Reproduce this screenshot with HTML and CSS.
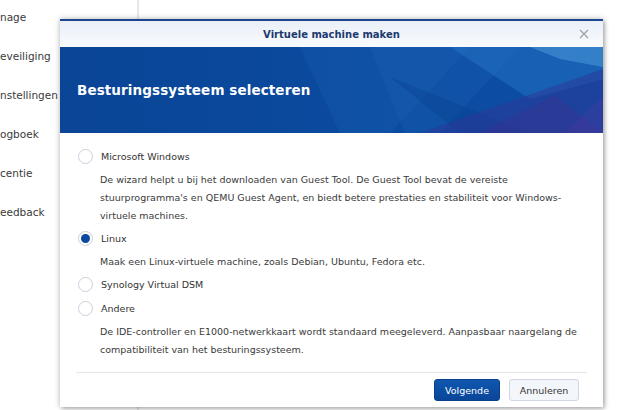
FILE: index.html
```html
<!DOCTYPE html>
<html lang="nl">
<head>
<meta charset="utf-8">
<title>Virtuele machine maken</title>
<link rel="stylesheet" href="styles.css">
</head>
<body>
<div class="page">
  <nav class="sidebar">
    <div class="nav-item">nage</div>
    <div class="nav-item">eveiliging</div>
    <div class="nav-item">nstellingen</div>
    <div class="nav-item">ogboek</div>
    <div class="nav-item">centie</div>
    <div class="nav-item">eedback</div>
  </nav>
  <div class="content"></div>

  <div class="dialog">
    <div class="dlg-header">
      <span class="dlg-title">Virtuele machine maken</span>
      <svg class="dlg-close" width="10" height="10" viewBox="0 0 10 10"><path d="M1 1L9 9M9 1L1 9" stroke="#9aa1aa" stroke-width="1.2" fill="none"/></svg>
    </div>
    <div class="banner">
      <svg class="banner-art" width="543" height="86" viewBox="0 0 543 86" preserveAspectRatio="none">
        <defs>
          <linearGradient id="bg" x1="0" y1="0" x2="1" y2="0">
            <stop offset="0" stop-color="#0a4596"/>
            <stop offset="0.55" stop-color="#0b4a9f"/>
            <stop offset="1" stop-color="#0d4fa6"/>
          </linearGradient>
        </defs>
        <rect width="543" height="86" fill="url(#bg)"/>
        <polygon points="240,0 410,0 330,86 280,86" fill="#1d63b6" opacity="0.28"/>
        <polygon points="310,0 460,0 380,86 345,86" fill="#2470c0" opacity="0.2"/>
        <polygon points="390,0 543,0 543,32 470,52" fill="#2a7cca" opacity="0.4"/>
        <polygon points="470,0 543,0 543,20 500,12" fill="#5fb0e6" opacity="0.4"/>
        <polygon points="330,30 470,86 400,86" fill="#083a88" opacity="0.3"/>
        <polygon points="360,86 543,22 543,86" fill="#2e3596" opacity="0.5"/>
        <polygon points="420,86 495,48 543,86" fill="#3b2f8e" opacity="0.4"/>
        <polygon points="505,86 543,50 543,86" fill="#4a3aa0" opacity="0.35"/>
      </svg>
      <h1 class="banner-title">Besturingssysteem selecteren</h1>
    </div>
    <div class="dlg-body">
      <div class="option">
        <span class="radio"></span>
        <span class="opt-label">Microsoft Windows</span>
      </div>
      <p class="opt-desc">De wizard helpt u bij het downloaden van Guest Tool. De Guest Tool bevat de vereiste stuurprogramma's en QEMU Guest Agent, en biedt betere prestaties en stabiliteit voor Windows-virtuele machines.</p>
      <div class="option">
        <span class="radio checked"></span>
        <span class="opt-label">Linux</span>
      </div>
      <p class="opt-desc">Maak een Linux-virtuele machine, zoals Debian, Ubuntu, Fedora etc.</p>
      <div class="option">
        <span class="radio"></span>
        <span class="opt-label">Synology Virtual DSM</span>
      </div>
      <div class="option">
        <span class="radio"></span>
        <span class="opt-label">Andere</span>
      </div>
      <p class="opt-desc">De IDE-controller en E1000-netwerkkaart wordt standaard meegeleverd. Aanpasbaar naargelang de compatibiliteit van het besturingssysteem.</p>
    </div>
    <div class="dlg-footer">
      <button class="btn btn-primary">Volgende</button>
      <button class="btn btn-secondary">Annuleren</button>
    </div>
  </div>
</div>
</body>
</html>
```
FILE: styles.css
```css
* { box-sizing: border-box; }
html, body { margin: 0; padding: 0; }
body {
  width: 620px;
  height: 410px;
  overflow: hidden;
  background: #ffffff;
  font-family: "DejaVu Sans", Verdana, sans-serif;
  color: #333;
}
.page {
  position: relative;
  width: 620px;
  height: 410px;
  display: flex;
}
.sidebar {
  width: 139px;
  height: 410px;
  border-right: 2px solid #e6e8eb;
  display: flex;
  flex-direction: column;
  padding-top: 10px;
}
.nav-item {
  height: 39px;
  line-height: 14px;
  font-size: 10.5px;
  color: #3a3a3a;
  white-space: nowrap;
}
.content { flex: 1; }

.dialog {
  position: absolute;
  left: 60px;
  top: 19px;
  width: 543px;
  height: 388px;
  background: #fff;
  display: flex;
  flex-direction: column;
  box-shadow: 0 0 6px rgba(0,0,0,0.28), 2px 2px 4px rgba(0,0,0,0.2);
}
.dlg-header {
  position: relative;
  height: 28px;
  border-top: 2px solid #1d4690;
  background: linear-gradient(#eaf0f8, #f8fafd);
  display: flex;
  align-items: center;
  justify-content: center;
}
.dlg-title {
  font-size: 10px;
  font-weight: bold;
  color: #1c3a70;
}
.dlg-close {
  position: absolute;
  right: 14px;
  top: 8px;
}
.banner {
  position: relative;
  height: 86px;
  display: flex;
  align-items: center;
  padding-left: 17px;
  overflow: hidden;
}
.banner-art {
  position: absolute;
  left: 0;
  top: 0;
}
.banner-title {
  position: relative;
  margin: 0;
  font-size: 13.5px;
  font-weight: bold;
  color: #fff;
  letter-spacing: 0.1px;
}
.dlg-body {
  flex: 1;
  padding: 11px 10px 0 18px;
}
.option {
  height: 24px;
  display: flex;
  align-items: center;
  gap: 8px;
}
.radio {
  width: 15px;
  height: 15px;
  border-radius: 50%;
  border: 1px solid #c9d1dc;
  background: #fff;
  display: flex;
  align-items: center;
  justify-content: center;
  flex: none;
}
.radio.checked::after {
  content: "";
  width: 9px;
  height: 9px;
  border-radius: 50%;
  background: #0b49a0;
}
.opt-label {
  font-size: 9.5px;
  color: #333;
}
.opt-desc {
  margin: 3px 0 1px 22px;
  font-size: 9.5px;
  line-height: 18px;
  color: #3a3a3a;
}
.dlg-footer {
  margin: 0 16px;
  border-top: 1px solid #e3e6ea;
  height: 35px;
  display: flex;
  justify-content: flex-end;
  align-items: flex-start;
  padding: 6px 8px 0 0;
  gap: 9px;
}
.btn {
  height: 22px;
  border-radius: 3px;
  font-family: "DejaVu Sans", Verdana, sans-serif;
  font-size: 9.5px;
  padding: 0;
}
.btn-primary {
  width: 66px;
  background: linear-gradient(#0f56b0, #0a4699);
  border: 1px solid #0a3f8c;
  color: #fff;
}
.btn-secondary {
  width: 70px;
  background: #f3f6fa;
  border: 1px solid #cfd6df;
  color: #333;
}
```
